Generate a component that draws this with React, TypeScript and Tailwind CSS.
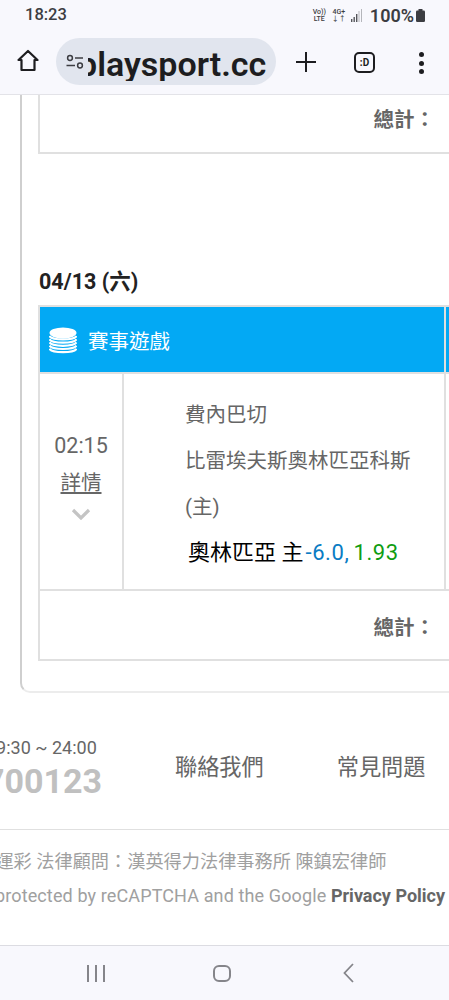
function StatusBar() {
  return (
    <div className="flex h-[30px] items-center justify-between pl-[25px] pr-[24px] pt-[1px] text-[#3c3d42]">
      <span className="text-[16.5px] font-medium leading-none">18:23</span>
      <div className="flex items-center">
        <div className="flex flex-col items-center text-[7px] font-medium leading-[7px]">
          <span>Vo))</span>
          <span>LTE</span>
        </div>
        <div className="ml-[6px] flex flex-col items-center text-[7px] font-medium leading-[7px]">
          <span>4G+</span>
          <span>↓↑</span>
        </div>
        <svg className="ml-[5px]" width="11" height="13" viewBox="0 0 11 13">
          <rect x="0" y="10" width="1.4" height="3" fill="#55565b" />
          <rect x="2.5" y="8" width="1.4" height="5" fill="#55565b" />
          <rect x="5" y="5" width="1.4" height="8" fill="#55565b" />
          <rect x="7.5" y="2" width="1" height="11" fill="#b5b6bb" />
          <rect x="10" y="0" width="1" height="13" fill="#b5b6bb" />
        </svg>
        <span className="ml-[8px] text-[18px] font-semibold leading-none">100%</span>
        <svg className="ml-[2px]" width="9" height="13" viewBox="0 0 9 13">
          <rect x="2.5" y="0" width="4" height="2" fill="#3c3d42" />
          <rect x="0" y="1.5" width="9" height="11.5" rx="1.2" fill="#3c3d42" />
        </svg>
      </div>
    </div>
  )
}

function Toolbar() {
  return (
    <div className="flex h-[65px] items-start border-b border-[#e3e3e8] pt-[8px]">
      <svg className="ml-[17px] mt-[11px]" width="22" height="23" viewBox="0 0 22 23" fill="none" stroke="#1d1d20" strokeWidth="2.2" strokeLinejoin="round">
        <path d="M11 2 L20.5 11 H17.5 V21 H4.5 V11 H1.5 Z" />
      </svg>
      <div className="ml-[17px] flex h-[47px] w-[220px] items-center overflow-hidden rounded-full bg-[#e1e5ee]">
        <svg className="ml-[10px] shrink-0" width="18" height="18" viewBox="0 0 18 18" fill="none" stroke="#3c3d42" strokeWidth="1.5">
          <circle cx="4" cy="5" r="2.4" />
          <path d="M9 5 H17" />
          <path d="M0.5 12.5 H9" />
          <circle cx="14" cy="12.5" r="2.4" />
        </svg>
        <div className="ml-[4px] w-[180px] shrink-0 overflow-hidden pt-[4px]">
          <span className="ml-[-10px] block whitespace-nowrap text-[34px] font-semibold leading-none text-[#1d1d20]">playsport.cc</span>
        </div>
      </div>
      <svg className="ml-[20px] mt-[14px]" width="20" height="20" viewBox="0 0 20 20" stroke="#1d1d20" strokeWidth="2">
        <path d="M10 0 V20 M0 10 H20" />
      </svg>
      <div className="ml-[38px] mt-[14px] flex h-[21px] w-[21px] items-center justify-center rounded-[5px] border-2 border-[#1d1d20] text-[10px] font-bold leading-none text-[#1d1d20]">
        :D
      </div>
      <div className="ml-[44px] mt-[14px] flex flex-col gap-[3.5px]">
        <span className="h-[5px] w-[5px] rounded-full bg-[#1d1d20]" />
        <span className="h-[5px] w-[5px] rounded-full bg-[#1d1d20]" />
        <span className="h-[5px] w-[5px] rounded-full bg-[#1d1d20]" />
      </div>
    </div>
  )
}

function Coins() {
  return (
    <svg className="mt-[4px]" width="28" height="28" viewBox="0 0 28 28" fill="none" stroke="#ffffff" strokeWidth="2.2">
      <ellipse cx="14" cy="6" rx="13.5" ry="5.5" fill="#ffffff" stroke="none" />
      <path d="M0.5 9 C3 13.5 25 13.5 27.5 9" />
      <path d="M0.5 12.2 C3 16.7 25 16.7 27.5 12.2" />
      <path d="M0.5 15.4 C3 19.9 25 19.9 27.5 15.4" />
      <path d="M0.5 18.6 C3 23.1 25 23.1 27.5 18.6" />
      <path d="M0.5 21.8 C3 26.3 25 26.3 27.5 21.8" />
    </svg>
  )
}

function GameTable() {
  return (
    <div className="w-[440px] border-2 border-r-0 border-[#e0e0e0]">
      <div className="flex h-[67px] border-b-2 border-[#e0e0e0] bg-[#03a9f4]">
        <div className="flex w-[406px] items-center border-r-2 border-[#e0e0e0] pl-[9px]">
          <Coins />
          <span className="ml-[11px] pt-[7px] text-[20.5px] leading-none text-white">賽事遊戲</span>
        </div>
      </div>
      <div className="flex h-[215px]">
        <div className="flex w-[84px] flex-col items-center border-r-2 border-[#e0e0e0] pt-[61px] text-[#666666]">
          <span className="text-[21.5px] leading-none">02:15</span>
          <span className="mt-[17px] text-[20.5px] leading-none underline underline-offset-2">詳情</span>
          <svg className="mt-[14px]" width="20" height="12" viewBox="0 0 20 12" fill="none" stroke="#c4c4c4" strokeWidth="3.2">
            <path d="M2 2 L10 10 L18 2" />
          </svg>
        </div>
        <div className="w-[322px] border-r-2 border-[#e0e0e0] pl-[61px] pt-[18px] text-[20.5px] leading-[46px] text-[#666666]">
          <div>費內巴切</div>
          <div className="whitespace-nowrap">比雷埃夫斯奧林匹亞科斯</div>
          <div>(主)</div>
          <div className="ml-[3px] flex whitespace-nowrap text-[22px]">
            <span className="text-black">奧林匹亞 主</span>
            <span className="ml-[2px] tracking-[0.6px] text-[#0a7cc4]">-6.0,</span>
            <span className="ml-[4px] tracking-[0.6px] text-[#0f9d12]">1.93</span>
          </div>
        </div>
      </div>
      <div className="flex h-[70px] items-center justify-end border-t-2 border-[#e0e0e0] pr-[43px] pt-[7px] text-[20.5px] font-bold leading-none text-[#666666]">
        總計：
      </div>
    </div>
  )
}

export default function App() {
  return (
    <div
      className="flex h-[1000px] w-[449px] flex-col overflow-hidden bg-white"
      style={{ fontFamily: 'Roboto, "Noto Sans CJK TC", sans-serif' }}
    >
      <div className="bg-[#f8f8fd]">
        <StatusBar />
        <Toolbar />
      </div>

      <main className="flex-1 overflow-hidden">
        {/* card */}
        <div className="ml-[20px] h-[598px] w-[460px] rounded-bl-[10px] border-b-2 border-l-2 border-[#ececec] border-l-[#cfcfcf] pl-[16px]">
          <div className="flex h-[59px] w-[440px] items-center justify-end border-b-2 border-l-2 border-[#e0e0e0] pb-[7px] pr-[43px] text-[20.5px] font-bold leading-none text-[#666666]">
            總計：
          </div>
          <div className="mt-[117px] pl-[1px] text-[21.5px] font-bold leading-none text-[#222222]">04/13 (六)</div>
          <div className="mt-[12px]">
            <GameTable />
          </div>
        </div>

        {/* footer */}
        <div className="mt-[46px] flex h-[91px] items-start border-b border-[#e0e0e0]">
          <div className="ml-[-14px] w-[189px] shrink-0">
            <div className="text-[18px] leading-none text-[#666666]">09:30 ~ 24:00</div>
            <div className="mt-[7px] ml-[-1px] text-[34px] font-bold leading-none text-[#c0c0c0]">700123</div>
          </div>
          <span className="mt-[17px] whitespace-nowrap text-[22.2px] leading-none text-[#666666]">聯絡我們</span>
          <span className="ml-[73px] mt-[17px] whitespace-nowrap text-[22.2px] leading-none text-[#666666]">常見問題</span>
        </div>
        <div className="mt-[23px] ml-[-41px] w-[520px] whitespace-nowrap text-[18.2px] leading-none text-[#a0a0a0]">
          博彩運彩 法律顧問：漢英得力法律事務所 陳鎮宏律師
        </div>
        <div className="mt-[16px] ml-[-5px] w-[520px] whitespace-nowrap text-[18px] leading-none text-[#a0a0a0]">
          <span className="tracking-[0.12px]">protected by reCAPTCHA and the Google </span>
          <b className="text-[#666666]">Privacy Policy</b>
        </div>
      </main>

      <div className="flex h-[55px] items-center border-t border-[#dcdce2] bg-[#f8f8fd] pl-[87px]">
        <div className="flex gap-[6px]">
          <span className="h-[17px] w-[2px] bg-[#85858a]" />
          <span className="h-[17px] w-[2px] bg-[#85858a]" />
          <span className="h-[17px] w-[2px] bg-[#85858a]" />
        </div>
        <span className="ml-[108px] h-[17px] w-[18px] rounded-[6px] border-2 border-[#85858a]" />
        <svg className="ml-[112px]" width="11" height="20" viewBox="0 0 11 20" fill="none" stroke="#85858a" strokeWidth="1.8">
          <path d="M10 1 L1.5 10 L10 19" />
        </svg>
      </div>
    </div>
  )
}
